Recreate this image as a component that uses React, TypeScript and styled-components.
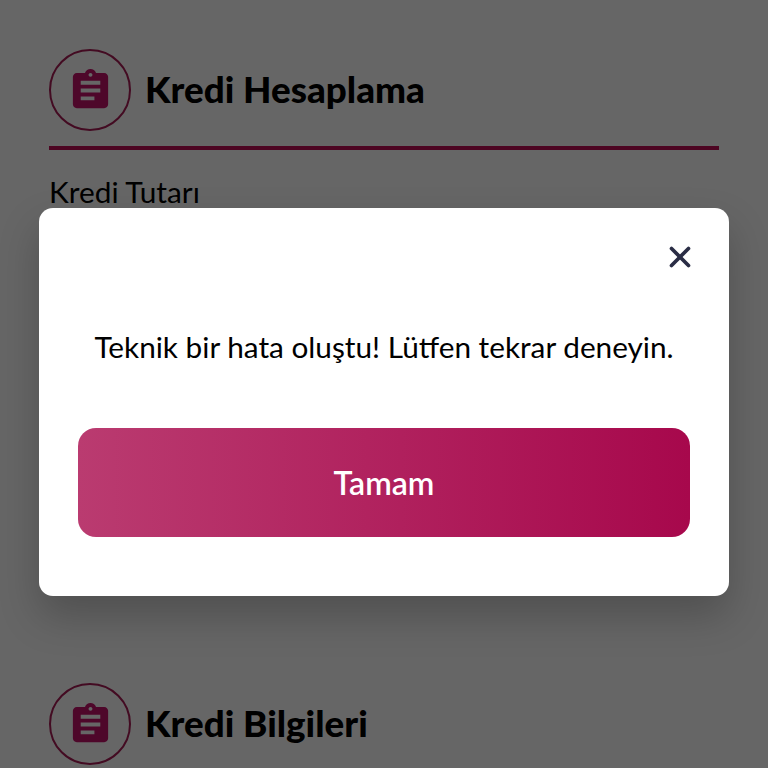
import React from 'react';
import styled, { createGlobalStyle } from 'styled-components';
import { MdAssignment } from 'react-icons/md';
import { X } from 'lucide-react';

const GlobalStyle = createGlobalStyle`
  html, body {
    margin: 0;
    padding: 0;
    background: #fff;
  }
  body {
    font-family: Lato, "Noto Sans", "Liberation Sans", sans-serif;
    color: #000;
  }
`;

const Page = styled.main`
  width: 768px;
  height: 768px;
  overflow: hidden;
  position: relative;
  box-sizing: border-box;
  padding: 49px 49px 0;
`;

const SectionHeader = styled.header`
  display: flex;
  align-items: center;
  gap: 14px;
`;

const IconRing = styled.div`
  width: 82px;
  height: 82px;
  box-sizing: border-box;
  border: 2px solid #a81c55;
  border-radius: 50%;
  display: flex;
  align-items: center;
  justify-content: center;
  color: #c4126a;
  flex: none;
`;

const SectionTitle = styled.h2`
  margin: 0;
  font-size: 36.8px;
  font-weight: 900;
  line-height: 80px;
  height: 82px;
  letter-spacing: 0;
`;

const Divider = styled.div`
  height: 4px;
  margin-top: 15px;
  background: #c00d55;
`;

const FieldLabel = styled.div`
  margin-top: 25px;
  font-size: 29.8px;
  line-height: 34px;
  height: 508px;
`;

const Scrim = styled.div`
  position: absolute;
  inset: 0;
  background: rgba(0, 0, 0, 0.6);
  display: flex;
  align-items: flex-start;
  justify-content: center;
  padding-top: 208px;
  box-sizing: border-box;
`;

const Dialog = styled.section`
  width: 690px;
  height: 388px;
  box-sizing: border-box;
  background: #fff;
  border-radius: 14px;
  box-shadow: 0 20px 40px rgba(0, 0, 0, 0.22);
  padding: 32px 39px 59px;
  display: flex;
  flex-direction: column;
`;

const CloseRow = styled.div`
  display: flex;
  justify-content: flex-end;
  height: 34px;
`;

const CloseButton = styled.button`
  width: 34px;
  height: 34px;
  margin-right: -7px;
  padding: 0;
  border: 0;
  background: none;
  color: #2a2d45;
  display: flex;
  align-items: center;
  justify-content: center;
`;

const Message = styled.p`
  margin: 51px 0 0;
  font-size: 29.75px;
  line-height: 44px;
  text-align: center;
  white-space: nowrap;
`;

const ConfirmButton = styled.button`
  margin-top: auto;
  height: 109px;
  border: 0;
  border-radius: 18px;
  background: linear-gradient(90deg, #ba3b70 0%, #a7084c 100%);
  color: #fff;
  font-family: inherit;
  font-size: 32px;
  font-weight: 600;
`;

const Section = ({ title }: { title: string }) => (
  <SectionHeader>
    <IconRing>
      <MdAssignment size={47} />
    </IconRing>
    <SectionTitle>{title}</SectionTitle>
  </SectionHeader>
);

export default function App() {
  return (
    <>
      <GlobalStyle />
      <Page>
        <Section title="Kredi Hesaplama" />
        <Divider />
        <FieldLabel>Kredi Tutarı</FieldLabel>
        <Section title="Kredi Bilgileri" />
        <Scrim>
          <Dialog role="dialog">
            <CloseRow>
              <CloseButton aria-label="Kapat">
                <X size={34} strokeWidth={2.6} />
              </CloseButton>
            </CloseRow>
            <Message>Teknik bir hata oluştu! Lütfen tekrar deneyin.</Message>
            <ConfirmButton>Tamam</ConfirmButton>
          </Dialog>
        </Scrim>
      </Page>
    </>
  );
}
